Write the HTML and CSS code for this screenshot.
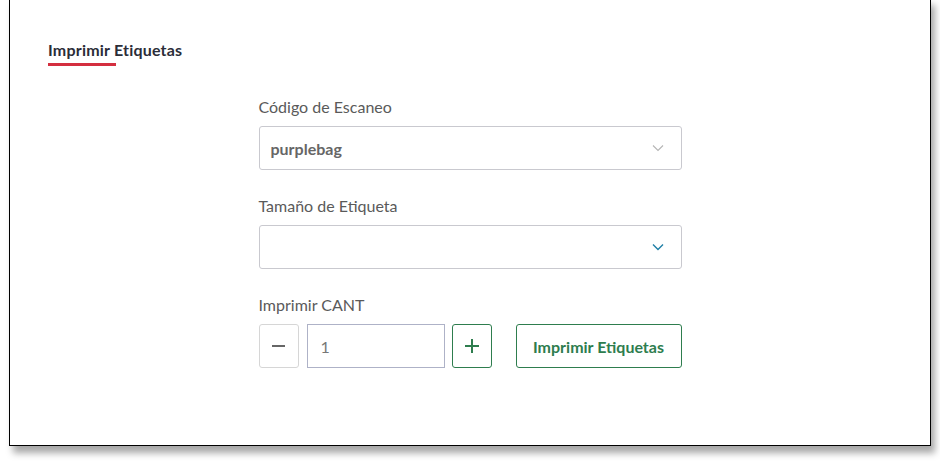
FILE: index.html
```html
<!DOCTYPE html>
<html lang="es">
<head>
<meta charset="utf-8">
<title>Imprimir Etiquetas</title>
<link rel="stylesheet" href="styles.css">
</head>
<body>
<div class="frame">
  <div class="tab-header">
    <span class="tab-title">Imprimir Etiquetas</span>
    <span class="tab-underline"></span>
  </div>
  <form class="form">
    <div class="field">
      <label class="field-label">Código de Escaneo</label>
      <div class="select">
        <span class="select-value">purplebag</span>
        <svg class="chevron chevron-grey" width="12" height="8" viewBox="0 0 12 8"><path d="M1 1.5 L6 6.5 L11 1.5" fill="none" stroke="currentColor" stroke-width="1.1"/></svg>
      </div>
    </div>
    <div class="field">
      <label class="field-label">Tamaño de Etiqueta</label>
      <div class="select">
        <span class="select-value"></span>
        <svg class="chevron chevron-blue" width="12" height="8" viewBox="0 0 12 8"><path d="M1 1.5 L6 6.5 L11 1.5" fill="none" stroke="currentColor" stroke-width="1.4"/></svg>
      </div>
    </div>
    <div class="field">
      <label class="field-label">Imprimir CANT</label>
      <div class="qty-row">
        <button type="button" class="step step-minus"><span class="minus-bar"></span></button>
        <div class="qty-input">1</div>
        <button type="button" class="step step-plus">
          <svg width="14" height="14" viewBox="0 0 14 14"><path d="M7 0 V14 M0 7 H14" stroke="currentColor" stroke-width="2"/></svg>
        </button>
        <button type="button" class="print-btn">Imprimir Etiquetas</button>
      </div>
    </div>
  </form>
</div>
</body>
</html>
```

FILE: styles.css
```css
* { box-sizing: border-box; }
html, body { margin: 0; padding: 0; background: #fff; }
body {
  font-family: Lato, "Open Sans", sans-serif;
  width: 940px;
  height: 464px;
  overflow: hidden;
}
.frame {
  margin: -2px 0 0 9px;
  width: 922px;
  height: 448px;
  border: 1px solid #000;
  background: #fff;
  box-shadow: 4px 7px 7px rgba(0, 0, 0, 0.35);
  padding: 0 38px;
}
.tab-header {
  padding-top: 41px;
  display: flex;
  flex-direction: column;
  align-items: flex-start;
}
.tab-title {
  font-size: 16px;
  font-weight: 700;
  letter-spacing: 0.2px;
  color: #2b2d38;
  line-height: 19px;
}
.tab-underline {
  margin-top: 4px;
  width: 68px;
  height: 3px;
  background: #d42f3f;
}
.form {
  width: 423px;
  margin: 31px auto 0;
  display: flex;
  flex-direction: column;
  gap: 26px;
}
.field { display: flex; flex-direction: column; }
.field-label {
  font-size: 16px;
  color: #5a5a5a;
  line-height: 19px;
  margin-bottom: 10px;
}
.select {
  height: 44px;
  border: 1px solid #c9c9cf;
  border-radius: 3px;
  display: flex;
  align-items: center;
  justify-content: space-between;
  padding: 0 17px 0 11px;
}
.select-value {
  font-size: 16px;
  font-weight: 700;
  color: #666;
}
.chevron { display: block; }
.chevron-grey { color: #b5b5b5; }
.chevron-blue { color: #1f7fa6; }
.qty-row {
  display: flex;
  align-items: center;
}
.step {
  width: 40px;
  height: 44px;
  border-radius: 3px;
  background: #fff;
  padding: 0;
  display: flex;
  align-items: center;
  justify-content: center;
}
.step-minus { border: 1px solid #d6d6d6; }
.minus-bar { width: 13px; height: 2px; background: #666; display: block; }
.step-plus { border: 1px solid #2e7d4e; color: #2e7d4e; }
.step-plus svg { display: block; }
.qty-input {
  margin: 0 7px 0 8px;
  width: 138px;
  height: 44px;
  border: 1px solid #aeb2c7;
  display: flex;
  align-items: center;
  padding-left: 13px;
  font-size: 16px;
  color: #777;
}
.print-btn {
  margin-left: 24px;
  width: 166px;
  height: 44px;
  border: 1px solid #2e7d4e;
  border-radius: 3px;
  background: #fff;
  color: #2e7d4e;
  font-family: Lato, "Open Sans", sans-serif;
  font-size: 16px;
  font-weight: 700;
  padding: 0;
}
```
